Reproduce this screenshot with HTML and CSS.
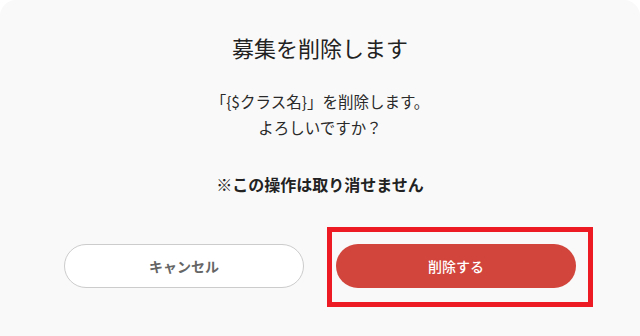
FILE: index.html
```html
<!DOCTYPE html>
<html lang="ja">
<head>
    <meta charset="UTF-8">
    <meta name="viewport" content="width=device-width, initial-scale=1">
    <title>募集を削除します</title>
    <link rel="stylesheet" href="styles.css">
</head>
<body>
<div class="dialog">
    <h1 class="dialog-title">募集を削除します</h1>
    <p class="dialog-message">「{$クラス名}」を削除します。<br>よろしいですか？</p>
    <p class="dialog-warning">※この操作は取り消せません</p>
    <div class="dialog-actions">
        <button type="button" class="btn btn-cancel">キャンセル</button>
        <div class="highlight">
            <button type="button" class="btn btn-delete">削除する</button>
        </div>
    </div>
</div>
</body>
</html>
```

FILE: styles.css
```css
* {
    font-family: "Noto Sans CJK JP", "Noto Sans", sans-serif;
    box-sizing: border-box;
}
html, body {
    margin: 0;
    background-color: #ffffff;
}
.dialog {
    width: 640px;
    height: 336px;
    background-color: #f9f9f9;
    border-radius: 16px 16px 0 0;
    padding: 32px 64px 0;
    text-align: center;
    color: #222;
}
.dialog-title {
    margin: 0;
    font-size: 22px;
    font-weight: 400;
    line-height: 30px;
}
.dialog-message {
    margin: 26px 0 0;
    font-size: 15.5px;
    line-height: 26px;
    color: #2a2a2a;
}
.dialog-warning {
    margin: 31px 0 0;
    font-size: 16px;
    font-weight: 700;
    line-height: 26px;
}
.dialog-actions {
    display: flex;
    gap: 32px;
    margin-top: 47px;
}
.btn {
    width: 240px;
    height: 44px;
    border-radius: 22px;
    font-size: 14px;
    font-weight: 700;
    cursor: pointer;
}
.btn-cancel {
    background-color: #fff;
    border: 1px solid #cccccc;
    color: #666;
}
.btn-delete {
    display: block;
    background-color: #d1453c;
    border: none;
    color: #fff;
    font-weight: 500;
}
.highlight {
    position: relative;
}
.highlight::after {
    content: "";
    position: absolute;
    left: -9px;
    top: -17px;
    right: -17px;
    bottom: -19px;
    border: 5px solid #ed1c24;
    pointer-events: none;
}
```
